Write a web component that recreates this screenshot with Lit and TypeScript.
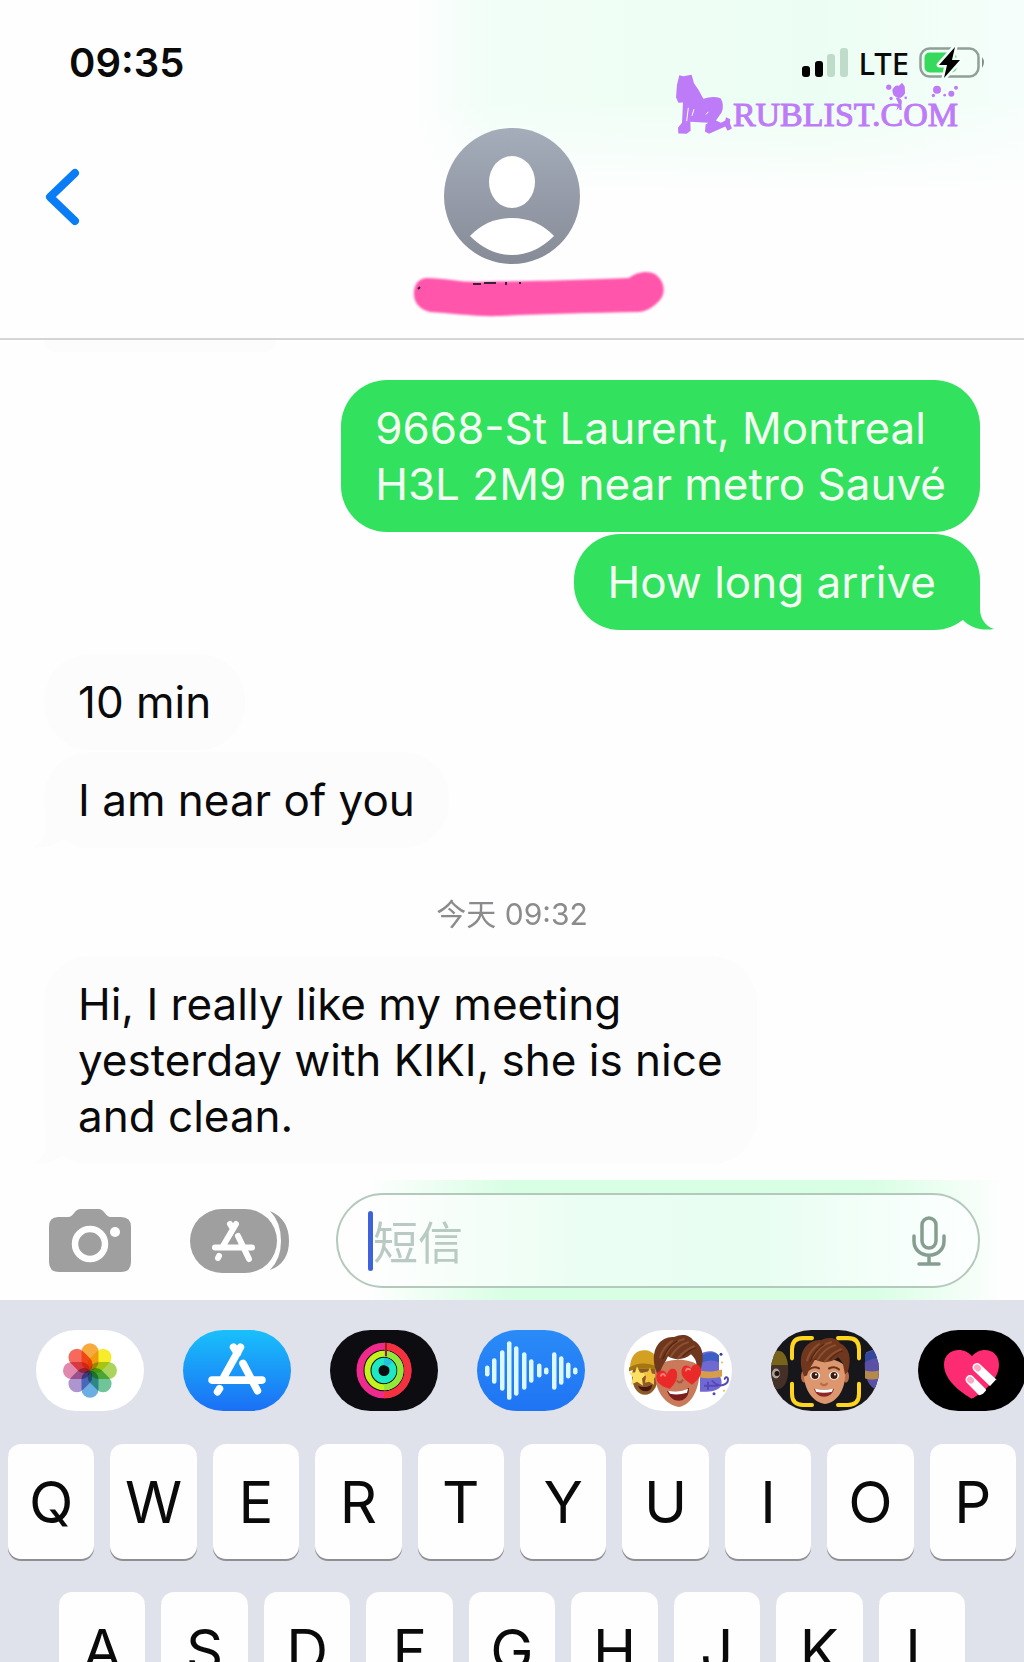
import { LitElement, html, css, svg } from "lit";
import { customElement, property } from "lit/decorators.js";

type Message = { from: "me" | "them"; text: string; tail?: boolean };

const FIRST: Message[] = [
  { from: "me", text: "9668-St Laurent, Montreal\nH3L 2M9 near metro Sauvé" },
  { from: "me", text: "How long arrive", tail: true },
];
const SECOND: Message[] = [
  { from: "them", text: "10 min" },
  { from: "them", text: "I am near of you", tail: true },
];
const THIRD: Message[] = [
  { from: "them", text: "Hi, I really like my meeting\nyesterday with KIKI, she is nice\nand clean.", tail: true },
];

const photos = svg`
  <rect width="108" height="80" fill="#fff"/>
  ${["#f7a128", "#f5ea14", "#a3d04a", "#5fbf8d", "#5aa5e0", "#a58acb", "#dd7ba5", "#f5584a"].map(
    (c, i) => svg`<rect class="petal" x="45.500" y="13" width="17" height="27" rx="8.500" fill=${c} transform=${`rotate(${i * 45} 54 40)`}/>`
  )}`;

const store = svg`
  <defs><linearGradient id="sky" x1="0" y1="0" x2="0" y2="1"><stop offset="0" stop-color="#19c0fb"/><stop offset="1" stop-color="#1b6ff5"/></linearGradient></defs>
  <rect width="108" height="80" fill="url(#sky)"/>
  <g fill="none" stroke="#fff" stroke-width="7.500" stroke-linecap="round">
    <path d="M57.500 17L41 46M50.500 17l4 6M60 33l14.500 27M29 49.500h50M36.500 58l-2 3"/>
  </g>`;

const rings = svg`
  <rect width="108" height="80" fill="#0d0d11"/>
  <g fill="none">
    <circle cx="54" cy="40" r="24" stroke="#ee2a8c" stroke-width="7"/>
    <path d="M54 16a24 24 0 0 1 0 48" stroke="#f5303f" stroke-width="7"/>
    <circle cx="54" cy="40" r="16.500" stroke="#c3f21c" stroke-width="6"/>
    <path d="M54 23.500a16.500 16.500 0 0 1 0 33" stroke="#92e83a" stroke-width="6"/>
    <circle cx="54" cy="40" r="9" stroke="#1fe8c4" stroke-width="7"/>
    <path d="M54 31a9 9 0 0 1 6 3" stroke="#23c3dc" stroke-width="7"/>
    <path d="M56 13v13" stroke="#a31634" stroke-width="2"/>
  </g>`;

const bars: number[][] = [
  [10, 35, 46], [17, 28, 53], [25, 20, 60], [32, 11, 69], [39, 16, 65], [47, 22, 59], [54, 29, 52],
  [62, 33, 47], [69, 37, 44], [77, 22, 59], [84, 26, 54], [91, 32, 48], [98, 37, 44],
];
const wave = svg`
  <defs><linearGradient id="blue" x1="0" y1="0" x2="0" y2="1"><stop offset="0" stop-color="#2a8bf7"/><stop offset="1" stop-color="#1f74f3"/></linearGradient></defs>
  <rect width="108" height="80" fill="url(#blue)"/>
  ${bars.map(([x, a, b]) => svg`<rect x=${x - 2} y=${a} width="4.500" height=${b - a} rx="2.200" fill="#dcf8ff"/>`)}`;

const hair = svg`
  <path d="M31 40C26 20 38 9 50 10C58 6 66 8 69 13C78 17 81 27 77 41L74 44L72 34C71 31 69 29 67 27C60 33 50 33 44 29C42 34 38 38 36 45L33 46Z" fill="#70371f"/>
  <path d="M42 27C46 20 51 14 60 12M47 29C51 22 56 17 64 15M54 31C58 26 62 22 70 19M36 30C38 23 42 18 48 14" fill="none" stroke="#8d4f30" stroke-width="2" stroke-linecap="round"/>
  <path d="M39 31C42 24 46 18 53 14M59 29C63 25 66 22 71 21" fill="none" stroke="#54260f" stroke-width="1.200" stroke-linecap="round"/>`;

const hearts = svg`
  <rect width="108" height="80" fill="#fff"/>
  <ellipse cx="21" cy="46" rx="13" ry="18" fill="#8b5a28"/>
  <path d="M6 38C6 24 14 19 22 20C30 21 33 27 33 34L31 38Z" fill="#d3a021"/>
  <path d="M5 37c9-5 18-5 28-1v4c-10-4-19-3-28 1z" fill="#a4760f"/>
  <path d="M13 36l3 6 7 1-5 5 1 7-6-4-6 3 2-7-4-5 6 0z" fill="#ffdf62"/>
  <path d="M26 37l2 6 5 1-3 4v6l-5-3-4 1 1-6-3-4 5-1z" fill="#f3c340"/>
  <path d="M14 55c5 2 9 2 14-1 0 8-11 9-14 1z" fill="#48160d"/>
  <path d="M76 24c8-5 17-3 19 2v18c7 12 0 18-19 17z" fill="#7169d2"/>
  <path d="M76 26c7-5 15-5 19-1v7c-7-3-12-2-19 1z" fill="#3d5fc5"/>
  <path d="M76 40c8 2 15 1 22-1v7c-7 2-15 2-22 1z" fill="#d69d4c"/>
  <path d="M88 50c8 9 16 3 16-1s-4-2-3 0M84 51v8M80 55h14" fill="none" stroke="#5548b8" stroke-width="2"/>
  <circle cx="97" cy="24" r="1.500" fill="#413b9b"/><circle cx="90" cy="63" r="1.500" fill="#5548b8"/><circle cx="100" cy="60" r="1" fill="#f3b83c"/><circle cx="98" cy="32" r="1" fill="#f3b83c"/>
  <path d="M31 38C30 62 42 74 55 76C67 74 77 58 75 36C67 27 40 27 31 38Z" fill="#c87a5a"/>
  <path d="M43 60q12 3 22-3c1 15-17 18-22 3z" fill="#7b1d1d"/>
  <path d="M44 60q11 2 20-2l-1 4q-9 3-17 1z" fill="#fff"/>
  <path d="M53 50q3 4 6-1" fill="none" stroke="#a25740" stroke-width="2"/>
  <g transform="translate(0 -3)">${hair}</g>
  <path d="M46 58C36 56 30 50 33 43C36 38 42 40 43 44C45 36 53 37 53 43C54 49 50 54 46 58Z" fill="#ea2a28"/>
  <path d="M68 54C60 49 56 45 58 38C60 33 66 35 67 38C69 32 76 33 77 39C78 46 73 50 68 54Z" fill="#ea2a28"/>
  <path d="M37 45q2-3 4 0M62 40q1-3 4-1" fill="none" stroke="#ff817a" stroke-width="2" stroke-linecap="round"/>`;

const face = svg`
  <rect width="108" height="80" fill="#17171b"/>
  <path d="M0 24C8 16 16 22 17 35H0Z" fill="#78631a"/>
  <path d="M0 35h17c2 20-8 27-17 22z" fill="#453027"/>
  <ellipse cx="5" cy="43" rx="4" ry="5" fill="#a9a19a"/><circle cx="6" cy="43" r="2.500" fill="#20120d"/>
  <path d="M95 22c6-3 10-3 13-2v40c-14-4-16-20-13-38z" fill="#5a50a6"/>
  <path d="M94 24c6-4 10-4 14-4v8c-6 0-9 1-14 4z" fill="#31469d"/>
  <path d="M94 40q7 2 14 0v8q-7 2-14 0z" fill="#b5894b"/>
  <ellipse cx="33" cy="46" rx="3" ry="6" fill="#b76948"/><ellipse cx="75" cy="46" rx="3" ry="6" fill="#b76948"/>
  <path d="M33 36C31 58 41 71 54 73C67 71 76 58 74 36C66 26 42 26 33 36Z" fill="#dc976f"/>
  <ellipse cx="44" cy="45" rx="5" ry="4" fill="#fff"/><ellipse cx="63" cy="45" rx="5" ry="4" fill="#fff"/>
  <circle cx="44" cy="45" r="3.500" fill="#3c1b10"/><circle cx="63" cy="45" r="3.500" fill="#3c1b10"/>
  <circle cx="45" cy="44" r="1" fill="#fff"/><circle cx="64" cy="44" r="1" fill="#fff"/>
  <path d="M38 39q5-4 10-1M58 38q6-3 10 1" fill="none" stroke="#6a321a" stroke-width="2" stroke-linecap="round"/>
  <path d="M50 53q3 3 6 0" fill="none" stroke="#b8694b" stroke-width="2" stroke-linecap="round"/>
  <path d="M43 58q10 2 20 0c-2 10-17 11-20 0z" fill="#8c2827"/><path d="M44 58q9 2 18 0l-1 3q-8 2-16 0z" fill="#fff"/>
  ${hair}
  <path d="M21 28V19Q21 8 32 8H41M67 8H77Q88 8 88 19V28M88 53V63Q88 74 77 74H67M41 74H32Q21 74 21 63V53" fill="none" stroke="#ffd51f" stroke-width="4" stroke-linecap="round"/>`;

const touch = svg`
  <rect width="108" height="80" fill="#000"/>
  <path d="M54 68C44 62 26 50 26 34C26 19 45 15 54 26C63 15 81 19 81 34C81 50 64 62 54 68Z" fill="#fd2b72"/>
  <g stroke="#fff" stroke-width="9" stroke-linecap="round"><path d="M59 37L75 52M52 49L64 61"/></g>
  <path d="M54 68l11-5 13-14 10 9-20 20z" fill="#000"/>
  <g stroke="#fda9c2" stroke-width="6" stroke-linecap="round"><path d="M59 37l1 1M52 49l1 1"/></g>`;

const APPS = [
  { name: "Photos", art: photos },
  { name: "App Store", art: store },
  { name: "Activity", art: rings },
  { name: "Audio", art: wave },
  { name: "Memoji stickers", art: hearts },
  { name: "Memoji", art: face },
  { name: "Digital Touch", art: touch },
];

@customElement("chat-bubble")
export class ChatBubble extends LitElement {
  @property() from: "me" | "them" = "me";
  @property() text = "";
  @property({ type: Boolean }) tail = false;

  static styles = css`
    :host { display: flex; }
    .bubble {
      position: relative;
      box-sizing: border-box;
      max-width: 100%;
      margin: 0;
      padding: 20px 34px;
      border-radius: 46px;
      font-size: 44px;
      line-height: 56px;
      white-space: pre-line;
    }
    .me { margin-left: auto; background: #32e15d; color: #f3fff2; }
    .me.tailed { padding-right: 44px; }
    .them { background: #fcfcfd; color: #0a0a0a; }
    .tail { position: absolute; bottom: 0; width: 44px; height: 50px; }
    .me .tail { right: -14px; fill: #32e15d; }
    .them .tail { left: -12px; fill: #fcfcfd; transform: scaleX(-1); }
  `;

  render() {
    return html`<p class="bubble ${this.from} ${this.tail ? "tailed" : ""}">${this.text}${this.tail
      ? html`<svg class="tail" viewBox="0 0 44 50" aria-hidden="true"><path d="M0 20L24 0H30V29C30 38 35 46 44 49C32 51 20 48 12 39Z"/></svg>`
      : ""}</p>`;
  }
}

@customElement("app-root")
export class AppRoot extends LitElement {
  static styles = css`
    :host {
      display: flex;
      flex-direction: column;
      height: 100vh;
      overflow: hidden;
      background: #fefefe;
      color: #0a0a0a;
      font-family: Inter, "Noto Sans CJK SC", sans-serif;
    }
    button { border: 0; padding: 0; background: none; font: inherit; color: inherit; cursor: pointer; }
    svg { display: block; overflow: visible; }

    .header {
      position: relative;
      border-bottom: 2px solid #d5d5d7;
      background:
        linear-gradient(to bottom, transparent 30%, #fefefe 58%),
        linear-gradient(to right, #fefefe 40%, #f1fef7 48%, #ecfef3 80%, #f6fefb 100%);
    }
    .status {
      display: flex;
      align-items: center;
      gap: 10px;
      height: 62px;
      padding: 32px 38px 34px 69px;
    }
    .time { margin-right: auto; font-size: 40px; font-weight: 600; line-height: 62px; }
    .network { font: 500 31px/62px "Noto Sans", sans-serif; }
    .logo {
      position: absolute;
      top: 73px;
      right: 66px;
      display: grid;
      width: 283px;
      height: 62px;
      color: #be7bf8;
      fill: #be7bf8;
    }
    .logo svg, .brand { grid-area: 1 / 1; }
    .brand {
      align-self: end;
      justify-self: end;
      font: 34px/40px "Liberation Serif", serif;
      -webkit-text-stroke: 1px #be7bf8;
    }
    .nav {
      display: grid;
      grid-template-columns: 1fr auto 1fr;
      padding: 0 0 18px;
    }
    .back { justify-self: start; height: 136px; padding: 0 44px; }
    .contact { display: grid; justify-items: center; gap: 6px; }

    .thread { padding: 0 44px 16px; display: flex; flex-direction: column; }
    .earlier { width: 232px; height: 12px; border-radius: 0 0 46px 46px; background: #fcfcfd; margin-bottom: 28px; }
    .group { display: flex; flex-direction: column; gap: 2px; }
    .group + .group { margin-top: 24px; }
    .stamp {
      margin: 0;
      padding-top: 24px;
      text-align: center;
      font-size: 30px;
      line-height: 84px;
      color: #8b8b8d;
    }

    .composer {
      display: flex;
      align-items: center;
      gap: 48px;
      padding: 13px 44px 12px 48px;
      background:
        linear-gradient(to right, #fefefe 36%, transparent 50%, transparent 85%, #fefefe 98%),
        #d8fee4;
    }
    .field {
      flex: 1;
      min-width: 0;
      display: flex;
      align-items: center;
      box-sizing: border-box;
      height: 95px;
      padding: 0 32px 0 30px;
      border: 2px solid #b3c9bb;
      border-radius: 48px;
      background: linear-gradient(to right, #fefefe 5%, #ebfef3 38%, #e8fef1 65%, #fbfffe 97%);
    }
    .caret { flex: none; width: 5px; height: 60px; border-radius: 3px; background: #3e62dc; }
    .field input {
      flex: 1;
      min-width: 0;
      border: 0;
      padding: 0;
      outline: 0;
      background: none;
      font: 400 45px/60px "Noto Sans CJK SC", sans-serif;
    }
    .field input::placeholder { color: #b9cac2; opacity: 1; }

    .keyboard { flex: 1 0 auto; background: #e0e2eb; padding-top: 30px; }
    .apps { display: flex; gap: 39px; padding-left: 36px; margin-bottom: 33px; overflow: hidden; }
    .app { flex: none; width: 108px; height: 81px; border-radius: 41px; overflow: hidden; }
    .app svg { width: 108px; height: 81px; }
    .petal { mix-blend-mode: multiply; opacity: 0.9; }
    .keys { display: grid; grid-auto-flow: column; grid-auto-columns: 1fr; gap: 16px; margin-bottom: 33px; padding: 0 8px; }
    .keys.home { padding: 0 59px; margin-bottom: 0; }
    .key {
      height: 115px;
      border-radius: 13px;
      background: #fefefe;
      box-shadow: 0 2px 0 #8e8e93;
      font-size: 58px;
      line-height: 117px;
    }
  `;

  private bubbles(list: Message[]) {
    return html`<div class="group">
      ${list.map((m) => html`<chat-bubble .from=${m.from} .text=${m.text} .tail=${!!m.tail}></chat-bubble>`)}
    </div>`;
  }

  private keyRow(letters: string, kind = "") {
    return html`<div class="keys ${kind}">${[...letters].map((k) => html`<button class="key">${k}</button>`)}</div>`;
  }

  render() {
    return html`
      <header class="header">
        <div class="status">
          <span class="time">09:35</span>
          <svg width="46" height="30" viewBox="0 0 46 30" aria-label="Signal">
            <rect x="0" y="18" width="8" height="11" rx="3"/><rect x="13" y="13" width="8" height="16" rx="3"/>
            <g fill="#bfdccb"><rect x="25" y="6" width="8" height="23" rx="3"/><rect x="38" y="0" width="8" height="29" rx="3"/></g>
          </svg>
          <span class="network">LTE</span>
          <svg width="67" height="34" viewBox="0 0 67 34" aria-label="Battery charging">
            <rect x="1.500" y="2.500" width="58" height="28" rx="9" fill="none" stroke="#8fa097" stroke-width="2.500"/>
            <rect x="5.500" y="6.500" width="32" height="20" rx="5" fill="#37d95c"/>
            <path d="M63 11q4 5 0 11z" fill="#7e8d85"/>
            <path d="M36 1L20 19H28L25 32L41 14H33Z" fill="#000" stroke="#f4fff9" stroke-width="5" stroke-linejoin="round" paint-order="stroke"/>
          </svg>
        </div>
        <div class="logo">
          <svg width="283" height="62" viewBox="105 130 850 185" aria-hidden="true">
            <path d="M118 136L130 139L155 135L162 160Q178 180 190 207Q218 197 242 205Q254 225 245 248L228 272L243 279L256 272L258 262L271 268L270 280L276 296L263 303L256 290L236 299L207 312L195 305L197 284L205 279L151 276L152 303L140 312L115 311L114 294L126 279L129 218L115 219L108 202L111 165Z"/>
            <path d="M145 234L140 274M162 238L156 258M205 246L198 254" fill="none" stroke="#f0fff7" stroke-width="3"/>
            <circle cx="747" cy="172" r="8"/><path d="M758 180Q766 163 778 168L787 159L795 170L796 190Q788 206 774 204Q756 198 758 180Z"/>
            <circle cx="754" cy="206" r="5"/><circle cx="798" cy="204" r="4"/><path d="M768 204Q790 204 786 222L770 243L776 220Z"/>
            <circle cx="892" cy="180" r="12"/><circle cx="881" cy="197" r="5"/><circle cx="915" cy="196" r="4"/><circle cx="935" cy="192" r="9"/><circle cx="949" cy="174" r="6"/>
          </svg>
          <span class="brand">RUBLIST.COM</span>
        </div>
        <div class="nav">
          <button class="back" aria-label="Back">
            <svg width="36" height="60" viewBox="0 0 36 60"><path d="M31 7L6 31L31 55" fill="none" stroke="#0a7cf5" stroke-width="8" stroke-linecap="round" stroke-linejoin="round"/></svg>
          </button>
          <div class="contact">
            <svg width="136" height="136" viewBox="0 0 136 136" aria-label="Contact">
              <defs><linearGradient id="av" x1="0" y1="0" x2="0" y2="1"><stop offset="0" stop-color="#a5adba"/><stop offset="1" stop-color="#868b97"/></linearGradient></defs>
              <circle cx="68" cy="68" r="68" fill="url(#av)"/>
              <ellipse cx="68" cy="54" rx="23" ry="26" fill="#fff"/>
              <path d="M26 108Q43 90 68 90Q93 90 110 108Q91 127 68 127Q45 127 26 108Z" fill="#fff"/>
            </svg>
            <svg width="300" height="50" viewBox="362 270 300 50" aria-hidden="true">
              <defs><filter id="soft"><feGaussianBlur stdDeviation="1"/></filter></defs>
              <path d="M427 278C444 278 458 282 478 282C530 281 590 280 629 278C636 272 648 270 655 274C665 281 666 293 660 300C653 308 645 312 638 312C590 313 540 314 500 316C478 317 450 313 430 312C418 309 413 301 414 291C415 283 420 278 427 278Z" fill="#ff55ab" filter="url(#soft)"/>
              <path d="M473 284h8M484 283h12M506 282v3M520 282v2M418 289l2-2" stroke="#3c1f3a" stroke-width="2"/>
            </svg>
          </div>
        </div>
      </header>

      <main class="thread">
        <div class="earlier"></div>
        ${this.bubbles(FIRST)}
        ${this.bubbles(SECOND)}
        <p class="stamp">今天 09:32</p>
        ${this.bubbles(THIRD)}
      </main>

      <div class="composer">
        <button aria-label="Camera">
          <svg width="94" height="66" viewBox="0 0 94 66">
            <path d="M10 9H20C26 9 26 1 33 1H50C57 1 57 9 63 9H73Q83 9 83 19V54Q83 64 73 64H11Q1 64 1 54V19Q1 9 10 9Z" fill="#9f9f9f"/>
            <circle cx="42" cy="36" r="15" fill="none" stroke="#fff" stroke-width="6.500"/><circle cx="67" cy="24" r="5" fill="#fff"/>
          </svg>
        </button>
        <button aria-label="Apps">
          <svg width="98" height="66" viewBox="0 0 98 66">
            <path d="M80 3Q99 11 99 33Q99 55 80 62Q91 51 91 33Q91 14 80 3Z" fill="#9f9f9f"/>
            <rect x="0" y="1" width="87" height="64" rx="32" fill="#9f9f9f"/>
            <g fill="none" stroke="#fff" stroke-width="6" stroke-linecap="round"><path d="M46 16L33 38M40 16l3 5M48 28l11 23M25 39.500h37M29 48l-1 2"/></g>
          </svg>
        </button>
        <div class="field">
          <span class="caret"></span>
          <input type="text" placeholder="短信" aria-label="短信" />
          <button aria-label="Dictate">
            <svg width="34" height="50" viewBox="0 0 34 50" fill="none" stroke="#869e90" stroke-width="3.500" stroke-linecap="round">
              <rect x="10" y="2" width="14" height="30" rx="7"/><path d="M2 20v5c0 19 30 19 30 0v-5M17 40v7M7 48h20"/>
            </svg>
          </button>
        </div>
      </div>

      <section class="keyboard">
        <div class="apps">
          ${APPS.map((a) => html`<button class="app" aria-label=${a.name}><svg viewBox="0 0 108 80" preserveAspectRatio="none">${a.art}</svg></button>`)}
        </div>
        ${this.keyRow("QWERTYUIOP")}
        ${this.keyRow("ASDFGHJKL", "home")}
      </section>
    `;
  }
}
